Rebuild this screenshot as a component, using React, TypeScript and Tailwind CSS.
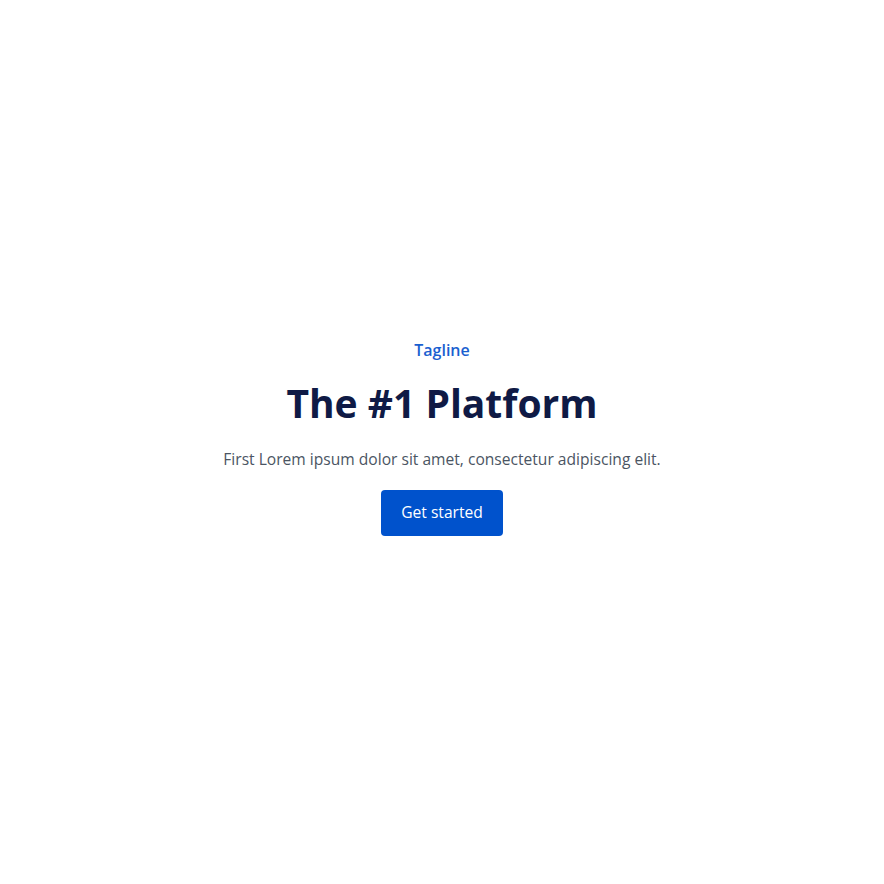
export default function App() {
  return (
    <section
      className="min-h-screen flex items-center justify-center bg-white px-6 pb-[10px]"
      style={{ fontFamily: '"Open Sans", "Noto Sans", sans-serif' }}
    >
      <div className="flex flex-col items-center text-center">
        <p className="text-base font-semibold text-[#1a5fd0] mb-[17px]">Tagline</p>
        <h1 className="text-[39px] leading-[48px] font-bold text-[#0f1a45] mb-[21px]">
          The #1 Platform
        </h1>
        <p className="text-[15.6px] text-[#4b5563] mb-[18px]">
          First Lorem ipsum dolor sit amet, consectetur adipiscing elit.
        </p>
        <button className="h-[46px] px-5 rounded bg-[#0052cc] text-white text-[15.6px]">
          Get started
        </button>
      </div>
    </section>
  );
}
